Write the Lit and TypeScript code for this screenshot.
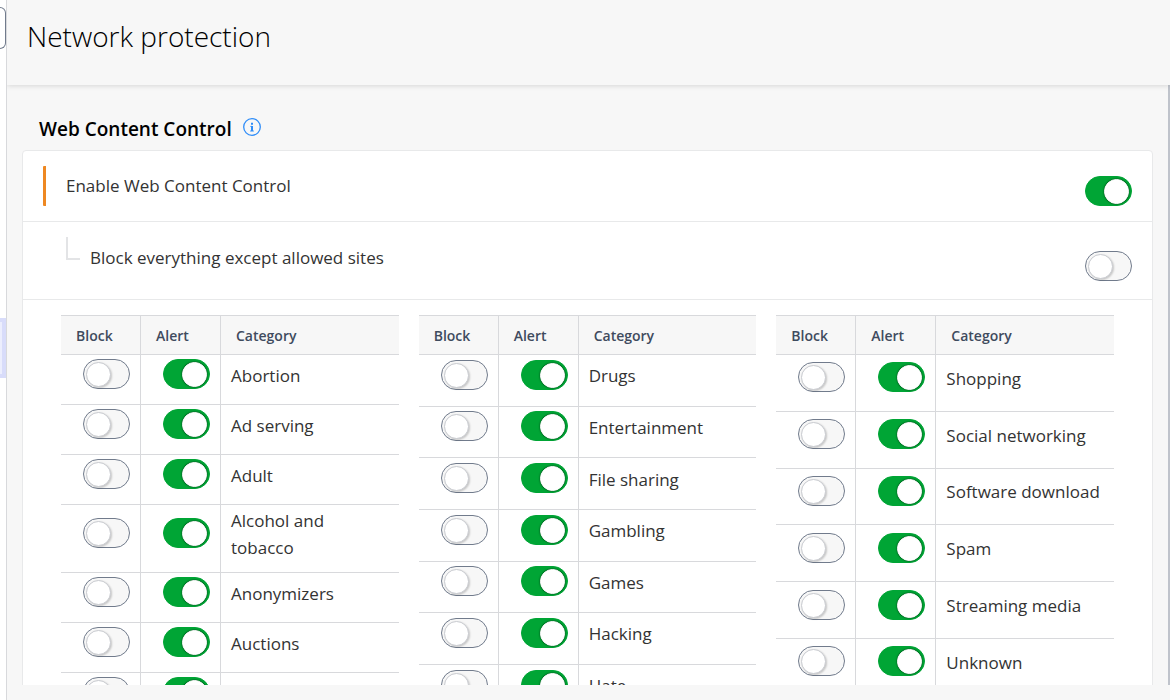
import { LitElement, html, css } from "lit";
import { customElement, property } from "lit/decorators.js";

const BLOCKLISTS: string[][] = [
  [
    "Abortion", "Ad serving", "Adult", "Alcohol and tobacco", "Anonymizers", "Auctions",
    "Chat", "Computing", "Criminal activity", "Cults", "Dating",
  ],
  [
    "Drugs", "Entertainment", "File sharing", "Gambling", "Games", "Hacking",
    "Hate", "Health", "Jobs", "News", "Religion",
  ],
  [
    "Shopping", "Social networking", "Software download", "Spam", "Streaming media", "Unknown",
    "Travel", "Violence", "Weapons", "Web mail",
  ],
];

const switchStyles = css`
  .switch {
    appearance: none;
    display: block;
    box-sizing: border-box;
    flex: none;
    width: 47px;
    height: 30px;
    margin: 0;
    padding: 2px 2px 1px;
    border: 1px solid #717b8c;
    border-radius: 15px;
    background: #f7f7f7;
    cursor: pointer;
  }
  .switch::before {
    content: "";
    display: block;
    box-sizing: border-box;
    width: 25px;
    height: 25px;
    border: 1px solid #c9cbd0;
    border-radius: 50%;
    background: #fff;
    box-shadow: 1px 1px 2px rgba(0, 0, 0, 0.2);
  }
  .switch:checked {
    border-color: #00a535;
    background: #00a535;
  }
  .switch:checked::before {
    margin-left: auto;
    border-color: #fff;
    box-shadow: 0 0 2px rgba(0, 0, 0, 0.7);
  }
`;

@customElement("category-table")
export class CategoryTable extends LitElement {
  @property({ attribute: false }) categories: string[] = [];

  static styles = [
    switchStyles,
    css`
      :host {
        display: grid;
      }
      .table {
        width: 100%;
        table-layout: fixed;
        border-spacing: 0;
      }
      .head {
        box-sizing: border-box;
        height: 40px;
        padding: 2px 15px 0;
        border-top: 1px solid #d8d9dc;
        border-bottom: 1px solid #d8d9dc;
        background: #f7f7f7;
        color: #3f4b5e;
        font-size: 14px;
        font-weight: 600;
        line-height: 20px;
        text-align: left;
      }
      .narrow {
        width: 80px;
        border-right: 1px solid #d8d9dc;
      }
      .cell {
        box-sizing: border-box;
        padding: 4px 10px 15px 22px;
        border-bottom: 1px solid #d8d9dc;
        vertical-align: middle;
      }
      .name {
        padding: 2px 12px 11px 10px;
        font-size: 17px;
        line-height: 27px;
      }
    `,
  ];

  render() {
    return html`
      <table class="table">
        <thead>
          <tr>
            <th class="head narrow" scope="col">Block</th>
            <th class="head narrow" scope="col">Alert</th>
            <th class="head" scope="col">Category</th>
          </tr>
        </thead>
        <tbody>
          ${this.categories.map(
            (name) => html`
              <tr>
                <td class="cell narrow">
                  <input class="switch" type="checkbox" role="switch" aria-label="Block ${name}" />
                </td>
                <td class="cell narrow">
                  <input class="switch" type="checkbox" role="switch" aria-label="Alert ${name}" checked />
                </td>
                <td class="cell name">${name}</td>
              </tr>
            `
          )}
        </tbody>
      </table>
    `;
  }
}

@customElement("app-root")
export class AppRoot extends LitElement {
  static styles = [
    switchStyles,
    css`
      :host {
        display: grid;
        grid-template-columns: 7px minmax(0, 1fr);
        height: 100vh;
        overflow: hidden;
        background: #f7f7f7;
        color: #333;
        font-family: "Segoe UI", "Open Sans", "Noto Sans", sans-serif;
        font-size: 17px;
      }
      .rail {
        box-sizing: border-box;
        border-right: 1px solid #d8d9dc;
        background: #fff;
      }
      .rail-box {
        box-sizing: border-box;
        height: 42px;
        margin-top: 7px;
        border: 1px solid #717b8c;
        border-left: 0;
        border-radius: 0 6px 6px 0;
      }
      .rail-active {
        box-sizing: border-box;
        height: 60px;
        margin-top: 269px;
        border: 4px solid #d8dcfa;
        border-left: 0;
        background: #eceefd;
      }
      .page {
        display: flex;
        flex-direction: column;
        min-width: 0;
        min-height: 0;
        overflow: hidden;
      }
      .header {
        z-index: 1;
        flex: none;
        padding: 16px 20px 29px;
        background: #f7f7f7;
        box-shadow: 0 1px 5px rgba(0, 0, 0, 0.13);
      }
      .title {
        margin: 0;
        color: #000;
        font-size: 28px;
        font-weight: 300;
        line-height: 40px;
      }
      .body {
        display: flex;
        flex: 1;
        min-height: 0;
        margin-bottom: 15px;
      }
      .scroll {
        flex: 1;
        min-width: 0;
        padding: 30px 15px 0;
        overflow-y: auto;
        scrollbar-width: none;
      }
      .thumb {
        width: 2px;
        background: #bfc3cb;
      }
      .section {
        display: flex;
        align-items: center;
        gap: 11px;
        padding: 0 17px;
        margin-bottom: 7px;
      }
      .section-title {
        margin: 0;
        color: #000;
        font-size: 19px;
        font-weight: 600;
        line-height: 28px;
      }
      .info {
        display: block;
        width: 18px;
        height: 18px;
        padding: 0;
        margin-bottom: 4px;
        border: 0;
        background: none;
      }
      .card {
        border: 1px solid #e8e9ea;
        border-radius: 4px;
        background: #fff;
      }
      .row {
        display: flex;
        align-items: center;
        justify-content: space-between;
        padding: 15px 20px;
        border-bottom: 1px solid #e8e9ea;
      }
      .label {
        flex: 1;
        padding-left: 20px;
        border-left: 3px solid #ee8822;
        border-radius: 1px;
        line-height: 40px;
      }
      .row-sub {
        padding-left: 43px;
      }
      .elbow {
        align-self: flex-start;
        box-sizing: border-box;
        width: 14px;
        height: 23px;
        margin-right: 10px;
        border-left: 2px solid #e3e4e6;
        border-bottom: 2px solid #e3e4e6;
      }
      .label-sub {
        flex: 1;
        padding-bottom: 6px;
        line-height: 41px;
      }
      .row-end {
        padding-top: 10px;
      }
      .tables {
        display: grid;
        grid-template-columns: repeat(3, minmax(0, 1fr));
        gap: 20px;
        padding: 15px 38px;
      }
    `,
  ];

  render() {
    return html`
      <div class="rail">
        <div class="rail-box"></div>
        <div class="rail-active"></div>
      </div>
      <main class="page">
        <header class="header"><h1 class="title">Network protection</h1></header>
        <div class="body">
          <div class="scroll">
            <div class="section">
              <h2 class="section-title">Web Content Control</h2>
              <button class="info" type="button" aria-label="More information">
                <svg width="18" height="18" viewBox="0 0 18 18" fill="none">
                  <circle cx="9" cy="9" r="8.3" stroke="#2f8df8" stroke-width="1.3" />
                  <path d="M9 4.8v2M9 8v5" stroke="#2f8df8" stroke-width="2" />
                  <path d="M7.4 8.4H9M7.2 13h3.6" stroke="#2f8df8" stroke-width="1" />
                </svg>
              </button>
            </div>
            <div class="card">
              <div class="row">
                <label class="label" for="enable">Enable Web Content Control</label>
                <div class="row-end">
                  <input class="switch" id="enable" type="checkbox" role="switch" checked />
                </div>
              </div>
              <div class="row row-sub">
                <span class="elbow"></span>
                <label class="label-sub" for="block-all">Block everything except allowed sites</label>
                <div class="row-end">
                  <input class="switch" id="block-all" type="checkbox" role="switch" />
                </div>
              </div>
              <div class="tables">
                ${BLOCKLISTS.map((list) => html`<category-table .categories=${list}></category-table>`)}
              </div>
            </div>
          </div>
          <div class="thumb"></div>
        </div>
      </main>
    `;
  }
}
